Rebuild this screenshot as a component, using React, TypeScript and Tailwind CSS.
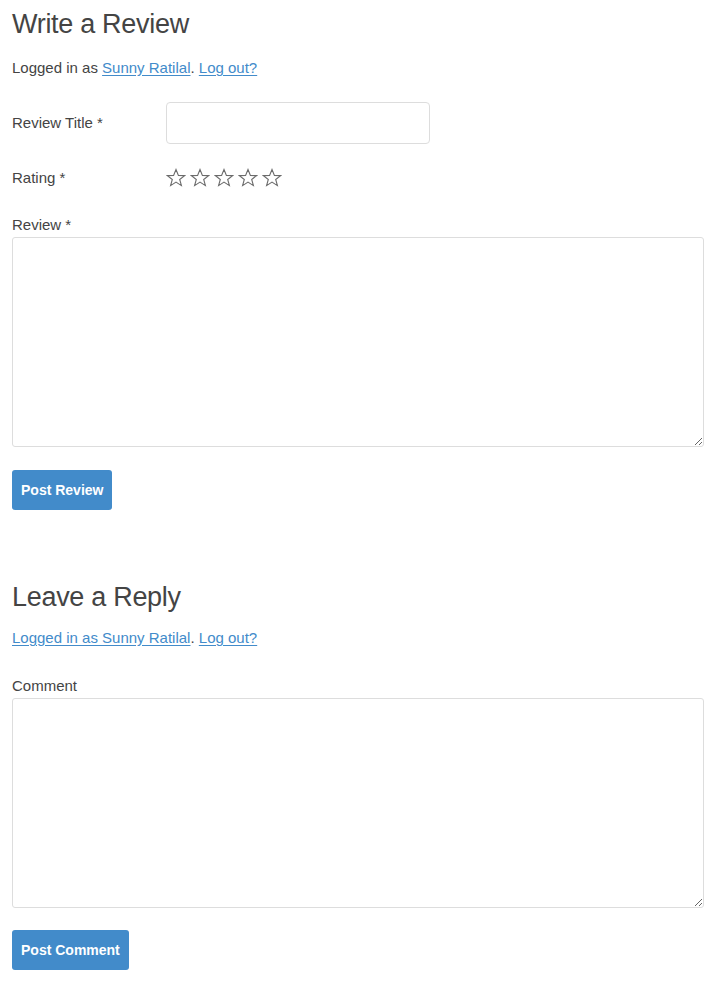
import React from "react";

function StarOutline() {
  return (
    <svg width="20" height="20" viewBox="0 0 20 20" className="block">
      <polygon
        points="10,1.5 12.4,7.4 18.6,7.6 13.7,11.5 15.4,17.6 10,14.1 4.6,17.6 6.3,11.5 1.4,7.6 7.6,7.4"
        fill="none"
        stroke="#6b6b6b"
        strokeWidth="1.1"
        strokeLinejoin="miter"
      />
    </svg>
  );
}

function Stars() {
  return (
    <div className="flex items-center gap-[4px]">
      {[0, 1, 2, 3, 4].map((i) => (
        <StarOutline key={i} />
      ))}
    </div>
  );
}

const link = "text-[#428bca] underline underline-offset-2";

export default function App() {
  return (
    <div
      className="bg-white text-[#444] text-[15px] leading-[20px] px-[12px] pt-[6px] pb-[20px] w-[719px] min-h-[990px]"
      style={{ fontFamily: '"Liberation Sans", Arial, sans-serif' }}
    >
      <h1 className="text-[27px] leading-[36px] font-normal text-[#444] tracking-[-0.3px]">Write a Review</h1>
      <p className="mt-[16px]">
        Logged in as <a className={link}>Sunny Ratilal</a>. <a className={link}>Log out?</a>
      </p>

      <div className="mt-[24px] flex items-center">
        <label className="w-[154px]">Review Title *</label>
        <input className="w-[264px] h-[42px] border border-[#ddd] rounded-[4px] px-3 outline-none" />
      </div>

      <div className="mt-[24px] flex items-center h-[20px]">
        <label className="w-[154px]">Rating *</label>
        <Stars />
      </div>

      <label className="block mt-[27px]">Review *</label>
      <textarea className="block mt-[2px] w-[692px] h-[210px] border border-[#ddd] rounded-[3px] outline-none" />

      <button className="mt-[23px] h-[40px] px-[9px] bg-[#428bca] text-white rounded-[3px] font-bold text-[14px]">
        Post Review
      </button>

      <h2 className="mt-[69px] text-[27px] leading-[36px] font-normal text-[#444] tracking-[-0.3px]">Leave a Reply</h2>
      <p className="mt-[13px]">
        <a className={link}>Logged in as Sunny Ratilal</a>. <a className={link}>Log out?</a>
      </p>

      <label className="block mt-[28px]">Comment</label>
      <textarea className="block mt-[2px] w-[692px] h-[210px] border border-[#ddd] rounded-[3px] outline-none" />

      <button className="mt-[22px] h-[40px] px-[9px] bg-[#428bca] text-white rounded-[3px] font-bold text-[14px]">
        Post Comment
      </button>
    </div>
  );
}
